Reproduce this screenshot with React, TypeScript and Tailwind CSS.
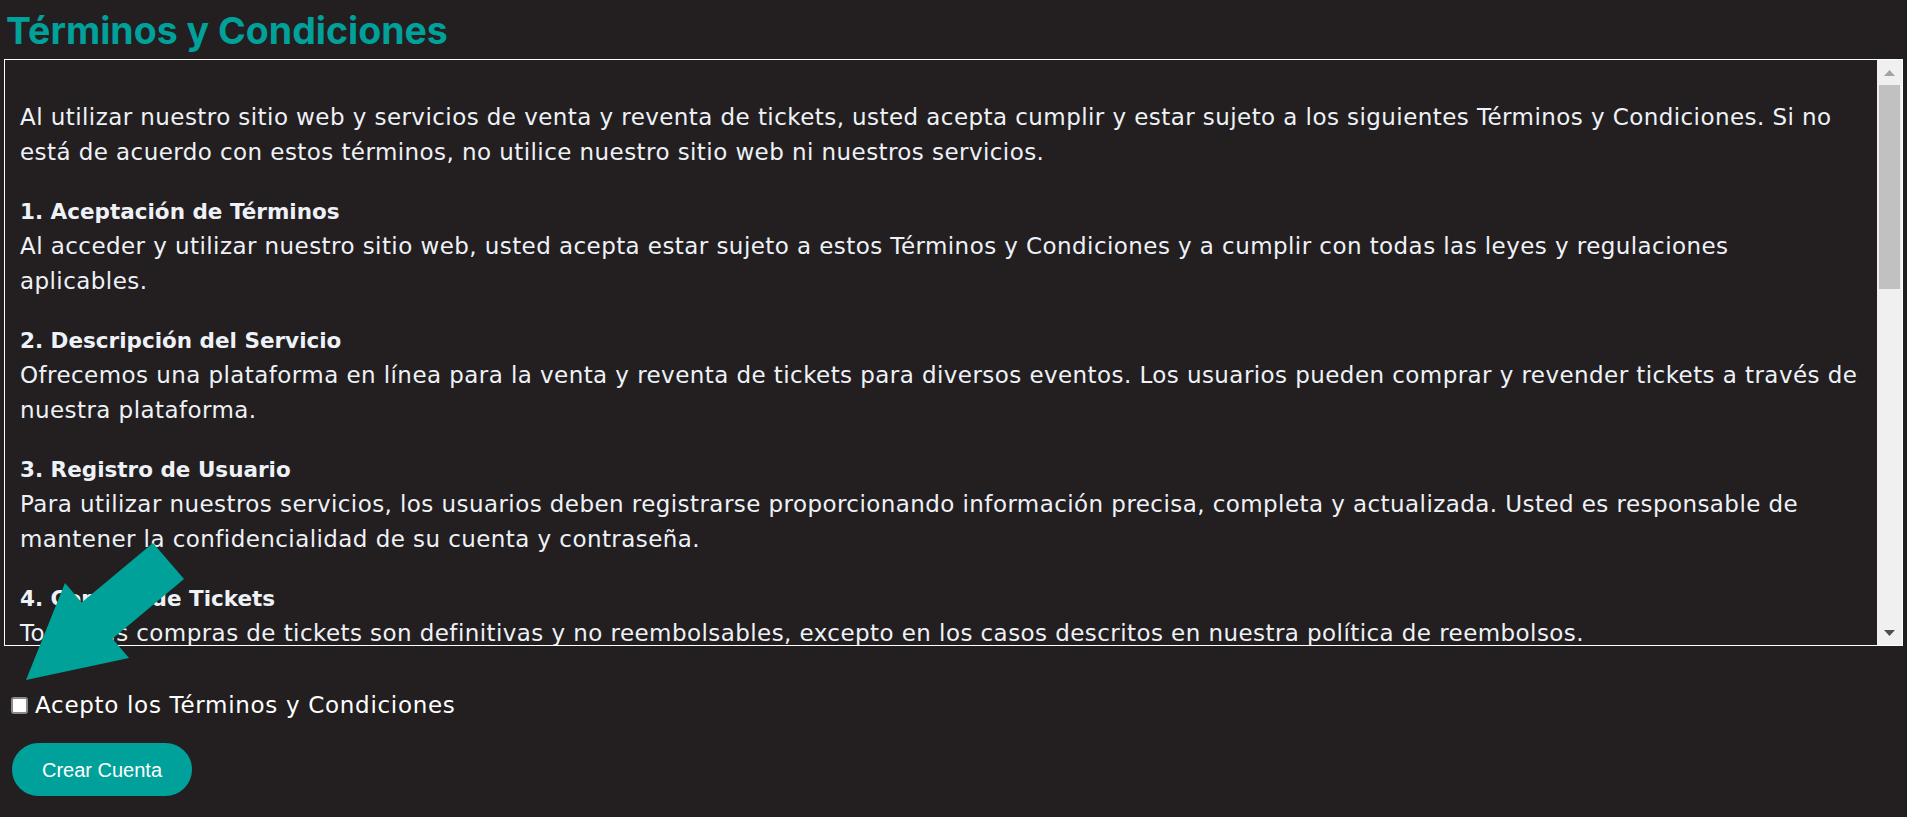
const sections = [
  {
    title: "",
    lines: [
      "Al utilizar nuestro sitio web y servicios de venta y reventa de tickets, usted acepta cumplir y estar sujeto a los siguientes Términos y Condiciones. Si no",
      "está de acuerdo con estos términos, no utilice nuestro sitio web ni nuestros servicios.",
    ],
  },
  {
    title: "1. Aceptación de Términos",
    lines: [
      "Al acceder y utilizar nuestro sitio web, usted acepta estar sujeto a estos Términos y Condiciones y a cumplir con todas las leyes y regulaciones",
      "aplicables.",
    ],
  },
  {
    title: "2. Descripción del Servicio",
    lines: [
      "Ofrecemos una plataforma en línea para la venta y reventa de tickets para diversos eventos. Los usuarios pueden comprar y revender tickets a través de",
      "nuestra plataforma.",
    ],
  },
  {
    title: "3. Registro de Usuario",
    lines: [
      "Para utilizar nuestros servicios, los usuarios deben registrarse proporcionando información precisa, completa y actualizada. Usted es responsable de",
      "mantener la confidencialidad de su cuenta y contraseña.",
    ],
  },
  {
    title: "4. Compra de Tickets",
    lines: [
      "Todas las compras de tickets son definitivas y no reembolsables, excepto en los casos descritos en nuestra política de reembolsos.",
    ],
  },
];

const Scrollbar = () => {
  return (
    <div className="flex w-[25px] flex-col bg-[#f0f0f0]">
      {/* up button */}
      <div className="flex h-[25px] items-center justify-center">
        <svg width="11" height="6" viewBox="0 0 11 6">
          <polygon points="5.5,0 11,6 0,6" fill="#a3a3a3" />
        </svg>
      </div>
      {/* track + thumb */}
      <div className="flex-1 px-[2px]">
        <div className="h-[204px] bg-[#c1c1c1]"></div>
      </div>
      {/* down button */}
      <div className="flex h-[25px] items-center justify-center">
        <svg width="11" height="6" viewBox="0 0 11 6">
          <polygon points="0,0 11,0 5.5,6" fill="#505050" />
        </svg>
      </div>
    </div>
  );
};

export default function App() {
  return (
    <div className="relative min-h-screen bg-[#231f20] px-[4px] pt-[8px] font-['DejaVu_Sans',sans-serif]">
      <h1 className="h-[46px] pl-[2px] font-['Inter',sans-serif] text-[37.5px] font-bold leading-[46px] text-[#00a19a]">
        Términos y Condiciones
      </h1>

      {/* Terms box */}
      <div className="mt-[5px] flex h-[587px] border border-white">
        <div className="flex-1 overflow-hidden whitespace-nowrap pl-[15px] pt-[40px] text-[23px] leading-[35px] tracking-[0.43px] text-[#eef2f7]">
          {sections.map((s, i) => (
            <p key={i} className="mb-6">
              {s.title && (
                <>
                  <strong className="text-[21.5px] font-bold tracking-normal">
                    {s.title}
                  </strong>
                  <br />
                </>
              )}
              {s.lines.map((line, j) => (
                <span key={j}>
                  {line}
                  {j < s.lines.length - 1 && <br />}
                </span>
              ))}
            </p>
          ))}
        </div>
        <Scrollbar />
      </div>

      {/* Checkbox */}
      <label className="mt-[42px] flex items-center text-[23px] leading-[35px] tracking-[0.7px] text-white">
        <input
          type="checkbox"
          className="ml-[7px] mr-[7px] h-[17px] w-[17px] appearance-none rounded-[3px] border-2 border-[#8a8a8a] bg-white"
        />
        Acepto los Términos y Condiciones
      </label>

      <button className="ml-[8px] mt-[20px] h-[53px] w-[180px] rounded-full bg-[#00a19a] font-['Liberation_Sans',Arial,sans-serif] text-[20px] text-white">
        Crear Cuenta
      </button>

      {/* Pointer arrow overlay */}
      <svg
        className="pointer-events-none absolute left-0 top-0"
        width="200"
        height="700"
        viewBox="0 0 200 700"
      >
        <polygon
          points="153,543 81.7,602.5 65,583 26,680 129,658 112.5,638.7 184,579"
          fill="#00a198"
        />
      </svg>
    </div>
  );
}
